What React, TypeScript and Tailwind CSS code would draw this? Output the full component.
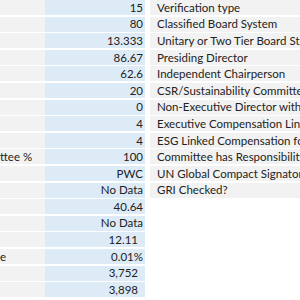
import React from "react";

type Row = { label: string; value: string; pad?: boolean; right?: string };

const rows: Row[] = [
  { label: "", value: "15", right: "Verification type" },
  { label: "", value: "80", right: "Classified Board System" },
  { label: "", value: "13.333", right: "Unitary or Two Tier Board Structure" },
  { label: "", value: "86.67", right: "Presiding Director" },
  { label: "", value: "62.6", right: "Independent Chairperson" },
  { label: "", value: "20", right: "CSR/Sustainability Committee" },
  { label: "", value: "0", right: "Non-Executive Director with Responsibility" },
  { label: "", value: "4", right: "Executive Compensation Linked to ESG" },
  { label: "", value: "4", right: "ESG Linked Compensation for Board" },
  { label: "ttee %", value: "100", right: "Committee has Responsibility for CSR" },
  { label: "", value: "PWC", right: "UN Global Compact Signatory" },
  { label: "", value: "No Data", right: "GRI Checked?" },
  { label: "", value: "40.64" },
  { label: "", value: "No Data" },
  { label: "", value: "12.11", pad: true },
  { label: "e", value: "0.01%" },
  { label: "", value: "3,752", pad: true },
  { label: "", value: "3,898", pad: true },
];

export default function App() {
  const font = { fontFamily: "Lato, 'Liberation Sans', sans-serif" };
  return (
    <div
      className="w-[300px] h-[300px] overflow-hidden bg-white flex text-[11.5px] text-[#222]"
      style={font}
    >
      <div className="w-[145px] shrink-0 flex flex-col gap-[1.6px]">
        {rows.map((r, i) => (
          <div key={i} className="h-[15px] flex">
            <div className="w-[45px] shrink-0 bg-[#f2f2f2] flex items-center overflow-hidden whitespace-nowrap leading-none">
              {r.label}
            </div>
            <div
              className={`flex-1 bg-[#ddebf7] flex items-center justify-end leading-none ${
                r.pad ? "pr-[7px]" : "pr-[2px]"
              }`}
            >
              {r.value}
            </div>
          </div>
        ))}
      </div>
      <div className="ml-[5px] flex-1 min-w-0 flex flex-col gap-[1.6px]">
        {rows
          .filter((r) => r.right)
          .map((r, i) => (
            <div
              key={i}
              className="h-[15px] bg-[#f2f2f2] flex items-center pl-[7px] whitespace-nowrap overflow-hidden leading-none"
            >
              {r.right}
            </div>
          ))}
      </div>
    </div>
  );
}
